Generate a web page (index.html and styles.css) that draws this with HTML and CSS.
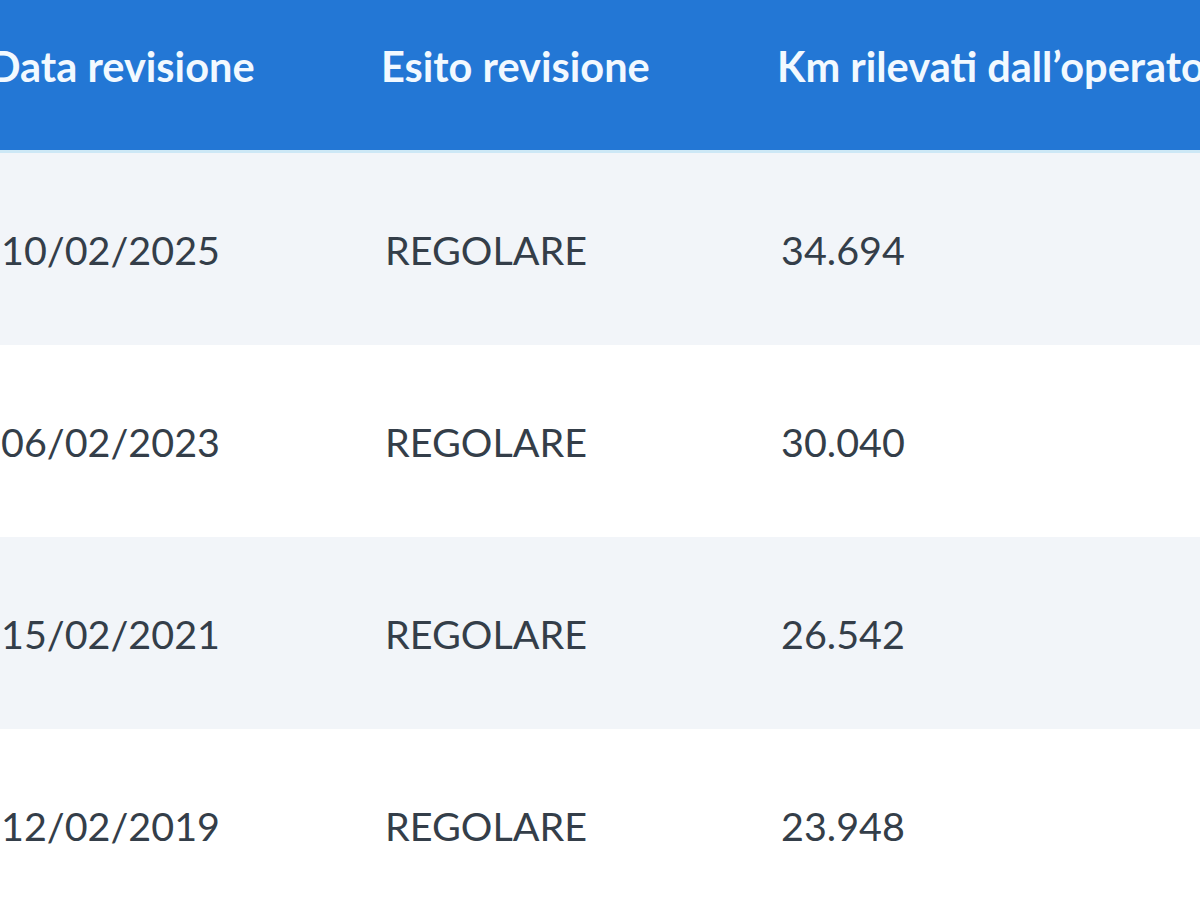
FILE: index.html
```html
<!DOCTYPE html>
<html lang="it">
<head>
<meta charset="utf-8">
<title>Revisioni</title>
<link rel="stylesheet" href="styles.css">
</head>
<body>
<div class="table">
  <div class="row head">
    <div class="cell first">Data revisione</div>
    <div class="cell">Esito revisione</div>
    <div class="cell">Km rilevati dall’operatore</div>
  </div>
  <div class="row alt">
    <div class="cell">10/02/2025</div>
    <div class="cell">REGOLARE</div>
    <div class="cell">34.694</div>
  </div>
  <div class="row">
    <div class="cell">06/02/2023</div>
    <div class="cell">REGOLARE</div>
    <div class="cell">30.040</div>
  </div>
  <div class="row alt">
    <div class="cell">15/02/2021</div>
    <div class="cell">REGOLARE</div>
    <div class="cell">26.542</div>
  </div>
  <div class="row">
    <div class="cell">12/02/2019</div>
    <div class="cell">REGOLARE</div>
    <div class="cell">23.948</div>
  </div>
</div>
</body>
</html>
```
FILE: styles.css
```css
html, body {
  margin: 0;
  padding: 0;
  background: #ffffff;
  overflow: hidden;
}
body {
  width: 1200px;
  height: 900px;
  font-family: Lato, "Open Sans", sans-serif;
  color: #343e49;
}
.table {
  margin-left: -3px;
  width: 1400px;
}
.row {
  display: grid;
  grid-template-columns: 384px 396px 1fr;
  align-items: center;
  height: 192px;
  white-space: nowrap;
}
.row .cell {
  font-size: 39.5px;
  padding-left: 4px;
}
.row.alt {
  background: #f2f5f9;
}
.row.head {
  background: #2377d5;
  border-bottom: 3px solid #cde8f6;
  color: #f2f9ff;
  align-items: start;
  padding-top: 41px;
  box-sizing: content-box;
  height: 109px;
}
.row.head .cell {
  font-size: 41.5px;
  font-weight: 700;
  padding-left: 0;
}
.row.head .cell.first {
  margin-left: -8px;
}
```
